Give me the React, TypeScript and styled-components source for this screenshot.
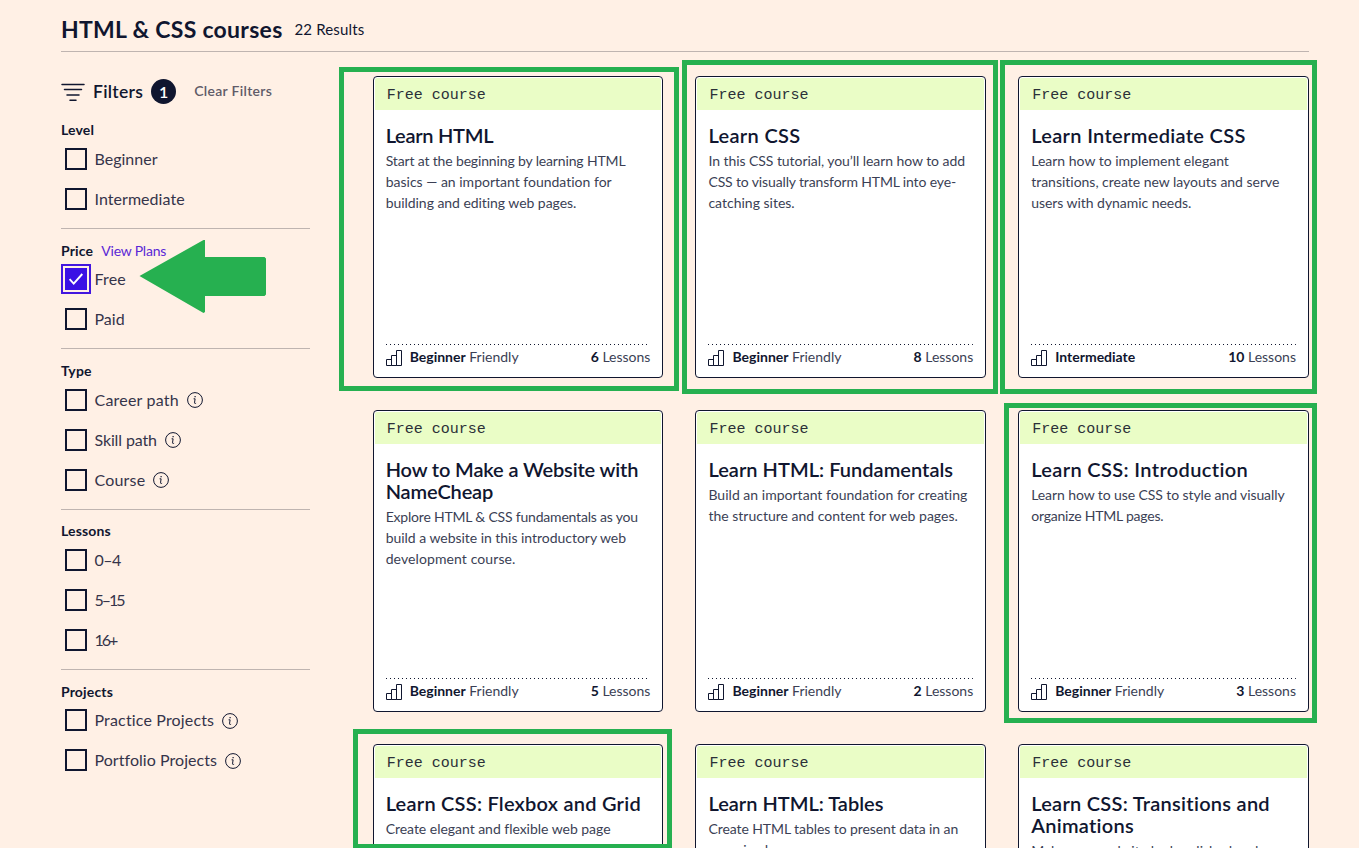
import React from 'react';
import styled, { createGlobalStyle } from 'styled-components';

const navy = '#10162f';
const green = '#26b050';

const GlobalStyle = createGlobalStyle`
  *, *::before, *::after { box-sizing: border-box; }
  html, body { margin: 0; background: #fff0e5; }
  body {
    font-family: Lato, "Liberation Sans", sans-serif;
    font-variant-ligatures: none;
    color: ${navy};
  }
  h1, h2, h3, p { margin: 0; }
`;

const Page = styled.div`
  position: relative;
  width: 1359px;
  height: 848px;
  overflow: hidden;
  padding: 8px 50px 0 61px;
`;

const Header = styled.header`
  display: flex;
  align-items: center;
  gap: 12px;
  height: 44px;
  padding-bottom: 2px;
  border-bottom: 1px solid #bfb4b0;
`;

const PageTitle = styled.h1`
  font-size: 23px;
  line-height: 30px;
  font-weight: 700;
  letter-spacing: 0.28px;
  white-space: nowrap;
`;

const ResultCount = styled.span`
  font-size: 15px;
  line-height: 24px;
  letter-spacing: 0.15px;
`;

const Columns = styled.div`
  display: flex;
  gap: 62.67px;
`;

const Sidebar = styled.aside`
  width: 249px;
  flex: none;
  padding-top: 24px;
`;

const FilterBar = styled.div`
  display: flex;
  align-items: center;
  height: 31.67px;
`;

const FilterTitle = styled.h2`
  margin-left: 8px;
  font-size: 17.5px;
  line-height: 24px;
  font-weight: 600;
  letter-spacing: 0.3px;
`;

const Badge = styled.span`
  display: flex;
  align-items: center;
  justify-content: center;
  width: 25px;
  height: 25px;
  margin-left: 8px;
  border-radius: 50%;
  background: ${navy};
  color: #fff;
  font-size: 16px;
  font-weight: 600;
`;

const ClearButton = styled.button`
  margin-left: 18px;
  padding: 0 0 1px;
  border: 0;
  background: none;
  font: 600 14px/20px Lato, sans-serif;
  letter-spacing: 0.3px;
  color: #605b68;
`;

const Group = styled.section<{ $first?: boolean }>`
  border-top: 1px solid ${(p) => (p.$first ? 'transparent' : '#bfb4b0')};
  padding-bottom: 9px;
`;

const GroupHead = styled.div`
  display: flex;
  gap: 8px;
  height: 30.33px;
  padding-top: 11.8px;
  font-size: 14px;
  line-height: 20px;
`;

const GroupTitle = styled.h3`
  font-size: 14px;
  line-height: 20px;
  font-weight: 700;
  letter-spacing: 0.15px;
`;

const PlansLink = styled.a`
  color: #5a28d6;
  letter-spacing: -0.2px;
`;

const Option = styled.label`
  display: flex;
  align-items: center;
  height: 40px;
  padding-left: 4px;
  font-size: 16px;
  line-height: 24px;
  color: #35344a;
`;

const OptionText = styled.span<{ $track?: number }>`
  letter-spacing: ${(p) => p.$track ?? 0}px;
`;

const Box = styled.span<{ $checked?: boolean }>`
  display: flex;
  align-items: center;
  justify-content: center;
  width: 22px;
  height: 22px;
  margin-right: 7.5px;
  border: 2px solid ${(p) => (p.$checked ? '#3a10e5' : navy)};
  background: ${(p) => (p.$checked ? '#3a10e5' : 'transparent')};
  outline: ${(p) => (p.$checked ? '2px solid #4316df' : 'none')};
  outline-offset: 2px;
`;

const InfoSvg = styled.svg`
  margin: 1px 0 0 8px;
`;

const Grid = styled.main`
  flex: 1;
  display: grid;
  grid-template-columns: repeat(3, 1fr);
  grid-auto-rows: 302px;
  gap: 32px;
  padding-top: 24px;
`;

const Card = styled.article`
  display: flex;
  flex-direction: column;
  padding: 1px;
  border: 1px solid ${navy};
  border-radius: 4px;
  background: #fff;
`;

const Ribbon = styled.div`
  flex: none;
  height: 32px;
  padding-left: 12px;
  border-radius: 2px 2px 0 0;
  background: #eafdc6;
  font: 15px/35px "Liberation Mono", monospace;
  color: #2a3038;
`;

const CardBody = styled.div`
  flex: 1;
  display: flex;
  flex-direction: column;
  padding: 14px 11px 9px;
`;

const CardTitle = styled.h2<{ $track?: number }>`
  font-size: 20px;
  line-height: 22px;
  font-weight: 600;
  letter-spacing: ${(p) => p.$track ?? 0.33}px;
  white-space: pre-line;
`;

const CardText = styled.p`
  margin-top: 4px;
  font-size: 14px;
  line-height: 21px;
  color: #3b3f55;
`;

const TextLine = styled.span<{ $track: number }>`
  display: block;
  white-space: nowrap;
  letter-spacing: ${(p) => p.$track}px;
`;

const CardFoot = styled.div`
  display: flex;
  align-items: center;
  height: 23px;
  margin-top: auto;
  background: repeating-linear-gradient(90deg, ${navy} 0 1px, transparent 1px 4px) top / 100% 1px no-repeat;
  font-size: 14px;
  line-height: 20px;
  color: #3b3f55;

  strong { color: ${navy}; font-weight: 700; }
  svg { margin-top: 5px; }
`;

const Level = styled.span`
  margin: 2px 0 0 8px;
`;

const LessonCount = styled.span`
  margin: 2px 0 0 auto;
`;

const Marker = styled.div<{ $x: number; $y: number; $w: number; $h: number }>`
  position: absolute;
  left: ${(p) => p.$x}px;
  top: ${(p) => p.$y}px;
  width: ${(p) => p.$w}px;
  height: ${(p) => p.$h}px;
  border: 5px solid ${green};
`;

const Arrow = styled.svg`
  position: absolute;
  left: 139px;
  top: 239px;
`;

const FilterIcon = () => (
  <svg width="24" height="20" viewBox="0 0 24 20" fill="none" stroke={navy} strokeWidth="1.5" strokeLinecap="round">
    <path d="M1 2.5h22M3.5 7.5h17M6 13h12M9 18.2h6" />
  </svg>
);

const InfoIcon = () => (
  <InfoSvg width="16" height="16" viewBox="0 0 16 16" fill="none" stroke={navy} strokeWidth="1">
    <circle cx="8" cy="8" r="7.4" />
    <path d="M6.6 6.8h1.5l-.6 4c0 .8.8.8 1.6.4" />
    <path d="M8.1 4.1v1.2" strokeWidth="1.2" />
  </InfoSvg>
);

const CheckIcon = () => (
  <svg width="16" height="14" viewBox="0 0 16 14" fill="none" stroke="#fff" strokeWidth="1.9">
    <path d="M1.6 7.2l4.1 4.4L14.3 2" />
  </svg>
);

const LevelIcon = () => (
  <svg width="16" height="16" viewBox="0 0 16 16" fill="none" stroke={navy} strokeWidth="1">
    <path d="M.5 9.500h5v6h-5zM5.500 5.500h5v10h-5zM10.500.5h5v15h-5z" />
  </svg>
);

type OptionData = { label: string; info?: boolean; checked?: boolean; track?: number };

const groups: { title: string; link?: string; options: OptionData[] }[] = [
  { title: 'Level', options: [{ label: 'Beginner' }, { label: 'Intermediate', track: 0.05 }] },
  { title: 'Price', link: 'View Plans', options: [{ label: 'Free', checked: true, track: 0.15 }, { label: 'Paid' }] },
  {
    title: 'Type',
    options: [
      { label: 'Career path', info: true, track: 0.2 },
      { label: 'Skill path', info: true, track: -0.13 },
      { label: 'Course', info: true, track: 0.2 },
    ],
  },
  {
    title: 'Lessons',
    options: [
      { label: '0–4', track: -0.5 },
      { label: '5–15', track: -2 },
      { label: '16+', track: -2 },
    ],
  },
  {
    title: 'Projects',
    options: [
      { label: 'Practice Projects', info: true, track: 0.16 },
      { label: 'Portfolio Projects', info: true, track: 0.05 },
    ],
  },
];

type Line = [text: string, track?: number];
type Course = { title: string; track?: number; lines: Line[]; level: string; lessons: number };

const courses: Course[] = [
  {
    title: 'Learn HTML',
    track: -0.27,
    lines: [
      ['Start at the beginning by learning HTML', -0.15],
      ['basics — an important foundation for'],
      ['building and editing web pages.', -0.05],
    ],
    level: 'Beginner',
    lessons: 6,
  },
  {
    title: 'Learn CSS',
    lines: [
      ['In this CSS tutorial, you’ll learn how to add', -0.06],
      ['CSS to visually transform HTML into eye-', -0.14],
      ['catching sites.'],
    ],
    level: 'Beginner',
    lessons: 8,
  },
  {
    title: 'Learn Intermediate CSS',
    lines: [
      ['Learn how to implement elegant'],
      ['transitions, create new layouts and serve', -0.02],
      ['users with dynamic needs.', -0.05],
    ],
    level: 'Intermediate',
    lessons: 10,
  },
  {
    title: 'How to Make a Website with\nNameCheap',
    track: -0.14,
    lines: [
      ['Explore HTML & CSS fundamentals as you', -0.2],
      ['build a website in this introductory web', -0.03],
      ['development course.', 0.1],
    ],
    level: 'Beginner',
    lessons: 5,
  },
  {
    title: 'Learn HTML: Fundamentals',
    track: 0.03,
    lines: [['Build an important foundation for creating', 0.02], ['the structure and content for web pages.']],
    level: 'Beginner',
    lessons: 2,
  },
  {
    title: 'Learn CSS: Introduction',
    track: 0.36,
    lines: [['Learn how to use CSS to style and visually', -0.09], ['organize HTML pages.', -0.22]],
    level: 'Beginner',
    lessons: 3,
  },
  {
    title: 'Learn CSS: Flexbox and Grid',
    track: 0.24,
    lines: [['Create elegant and flexible web page', -0.03]],
    level: 'Beginner',
    lessons: 2,
  },
  {
    title: 'Learn HTML: Tables',
    track: 0,
    lines: [['Create HTML tables to present data in an', -0.08], ['organized way.']],
    level: 'Beginner',
    lessons: 1,
  },
  {
    title: 'Learn CSS: Transitions and\nAnimations',
    track: 0.27,
    lines: [['Make your website look polished and']],
    level: 'Beginner',
    lessons: 2,
  },
];

const markers = [
  [339, 67, 340, 324],
  [682, 60, 316, 334],
  [1000, 60, 317, 334],
  [1004, 403, 313, 320],
  [353, 729, 319, 120],
];

export default function App() {
  return (
    <Page>
      <GlobalStyle />
      <Header>
        <PageTitle>HTML &amp; CSS courses</PageTitle>
        <ResultCount>22 Results</ResultCount>
      </Header>
      <Columns>
        <Sidebar>
          <FilterBar>
            <FilterIcon />
            <FilterTitle>Filters</FilterTitle>
            <Badge>1</Badge>
            <ClearButton>Clear Filters</ClearButton>
          </FilterBar>
          {groups.map((g, i) => (
            <Group key={g.title} $first={i === 0}>
              <GroupHead>
                <GroupTitle>{g.title}</GroupTitle>
                {g.link && <PlansLink>{g.link}</PlansLink>}
              </GroupHead>
              {g.options.map((o) => (
                <Option key={o.label}>
                  <Box $checked={o.checked}>{o.checked && <CheckIcon />}</Box>
                  <OptionText $track={o.track}>{o.label}</OptionText>
                  {o.info && <InfoIcon />}
                </Option>
              ))}
            </Group>
          ))}
        </Sidebar>
        <Grid>
          {courses.map((c) => (
            <Card key={c.title}>
              <Ribbon>Free course</Ribbon>
              <CardBody>
                <CardTitle $track={c.track}>{c.title}</CardTitle>
                <CardText>
                  {c.lines.map(([text, track = 0]) => (
                    <TextLine key={text} $track={track}>
                      {text}
                    </TextLine>
                  ))}
                </CardText>
                <CardFoot>
                  <LevelIcon />
                  <Level>
                    <strong>{c.level}</strong>
                    {c.level === 'Beginner' && ' Friendly'}
                  </Level>
                  <LessonCount>
                    <strong>{c.lessons}</strong> Lessons
                  </LessonCount>
                </CardFoot>
              </CardBody>
            </Card>
          ))}
        </Grid>
      </Columns>
      {markers.map(([x, y, w, h]) => (
        <Marker key={`${x}-${y}`} $x={x} $y={y} $w={w} $h={h} />
      ))}
      <Arrow width="128" height="75" viewBox="0 0 128 75" fill={green}>
        <path d="M.5 37L64.500 1H66V18H125.500L127 19.500V55.500L125.500 57H66V73L64.500 74Z" />
      </Arrow>
    </Page>
  );
}
